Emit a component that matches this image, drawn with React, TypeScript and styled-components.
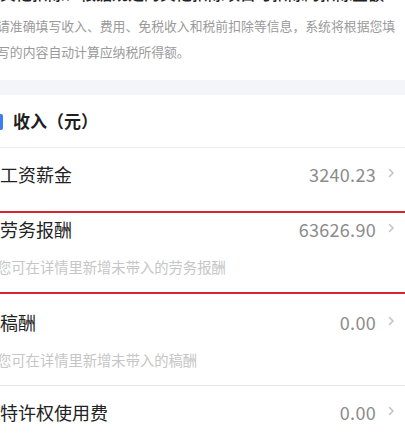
import React from 'react';
import styled, { createGlobalStyle } from 'styled-components';

const GlobalStyle = createGlobalStyle`
  html, body {
    margin: 0;
    padding: 0;
    background: #fff;
    overflow: hidden;
  }
  body {
    font-family: "Noto Sans CJK SC", "Noto Sans", sans-serif;
    -webkit-font-smoothing: antialiased;
  }
`;

const Page = styled.div`
  width: 405px;
  display: flex;
  flex-direction: column;
  background: #fff;
`;

const Intro = styled.div`
  padding: 0 0 15px 0;
  display: flex;
  flex-direction: column;
`;

const CutTitle = styled.div`
  margin-top: -19px;
  height: 24px;
  font-size: 16px;
  line-height: 24px;
  font-weight: 500;
  color: #222;
  white-space: nowrap;
`;

const Notice = styled.p`
  margin: 8px 0 0 -3px;
  font-size: 12.85px;
  line-height: 26px;
  color: #9a9a9a;
`;

const Band = styled.div`
  height: 15px;
  background: #f3f5f8;
`;

const SectionHeader = styled.div`
  height: 52px;
  display: flex;
  align-items: center;
  gap: 10px;
  border-bottom: 1px solid #ececec;
`;

const Marker = styled.span`
  width: 3px;
  height: 16px;
  margin-top: 1px;
  border-radius: 0 2px 2px 0;
  background: #3d7ef6;
`;

const SectionTitle = styled.h2`
  margin: 0;
  font-size: 17px;
  line-height: 24px;
  font-weight: 700;
  color: #1f1f1f;
`;

const Row = styled.div<{ $divider?: boolean; $flagged?: boolean; $sub?: boolean }>`
  position: relative;
  display: flex;
  flex-direction: column;
  gap: 17px;
  padding: ${p => (p.$sub ? '17px 10px 16px 0' : '14px 10px 14px 0')};
  border-bottom: ${p => (p.$divider ? '1px solid #e8e8e8' : 'none')};

  ${p =>
    p.$flagged &&
    `
    &::after {
      content: '';
      position: absolute;
      left: 0;
      right: 0;
      top: 11px;
      bottom: -2px;
      border-top: 2px solid #d9262e;
      border-bottom: 2px solid #d9262e;
      pointer-events: none;
    }
  `}
`;

const Main = styled.div`
  height: 24px;
  display: flex;
  align-items: center;
  justify-content: space-between;
`;

const Label = styled.span`
  font-size: 18px;
  line-height: 24px;
  color: #222;
`;

const ValueWrap = styled.span`
  display: flex;
  align-items: center;
  gap: 12px;
`;

const Value = styled.span`
  font-size: 18px;
  line-height: 24px;
  color: #8c8c8c;
  letter-spacing: 0.3px;
`;

const Hint = styled.div`
  margin-left: -3px;
  font-size: 14.3px;
  line-height: 18px;
  color: #c6c6c6;
`;

const Chevron = () => (
  <svg width="7" height="10" viewBox="0 0 7 10" style={{ marginTop: -2 }}>
    <polyline points="1.5,1.5 5,5 1.5,8.5" fill="none" stroke="#c2c2c2" strokeWidth="1.5" strokeLinecap="round" strokeLinejoin="round" />
  </svg>
);

type Income = {
  label: string;
  value: string;
  hint?: string;
  divider?: boolean;
  flagged?: boolean;
};

const incomes: Income[] = [
  { label: '工资薪金', value: '3240.23' },
  { label: '劳务报酬', value: '63626.90', hint: '您可在详情里新增未带入的劳务报酬', divider: true, flagged: true },
  { label: '稿酬', value: '0.00', hint: '您可在详情里新增未带入的稿酬', divider: true },
  { label: '特许权使用费', value: '0.00' },
];

const App: React.FC = () => {
  return (
    <Page>
      <GlobalStyle />
      <Intro>
        <CutTitle>其他扣除：根据规定的其他扣除项目与扣除的扣除金额</CutTitle>
        <Notice>
          请准确填写收入、费用、免税收入和税前扣除等信息，系统将根据您填写的内容自动计算应纳税所得额。
        </Notice>
      </Intro>
      <Band />
      <SectionHeader>
        <Marker />
        <SectionTitle>收入（元）</SectionTitle>
      </SectionHeader>
      {incomes.map(item => (
        <Row key={item.label} $divider={item.divider} $flagged={item.flagged} $sub={!!item.hint}>
          <Main>
            <Label>{item.label}</Label>
            <ValueWrap>
              <Value>{item.value}</Value>
              <Chevron />
            </ValueWrap>
          </Main>
          {item.hint && <Hint>{item.hint}</Hint>}
        </Row>
      ))}
    </Page>
  );
};

export default App;
